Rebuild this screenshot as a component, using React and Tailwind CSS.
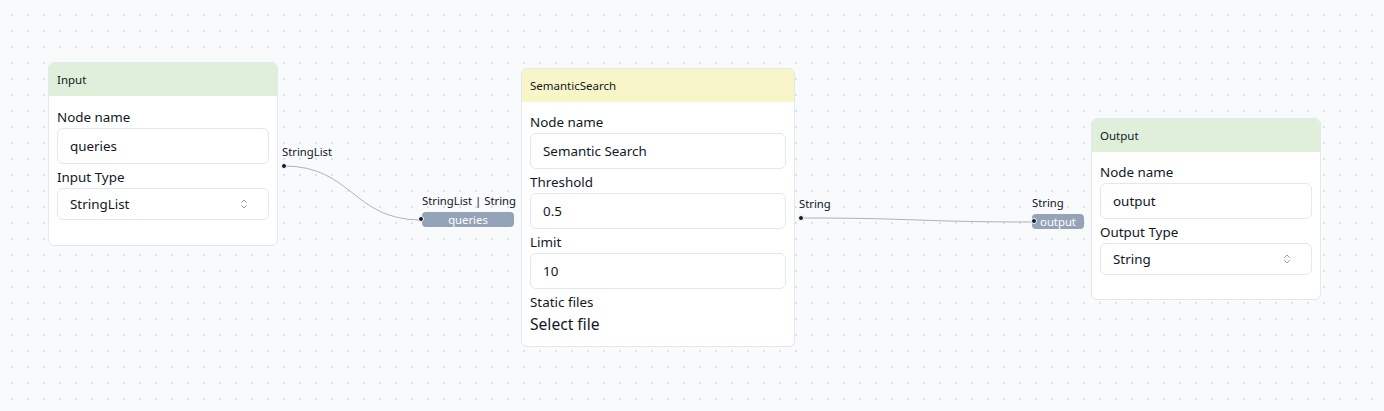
import React from "react";

function Field({ label, value }) {
  return (
    <div>
      <div className="text-[13.4px] leading-5 text-gray-900">{label}</div>
      <div className="mt-px h-[36px] rounded-md border border-slate-200 bg-white px-3 flex items-center text-[13.4px] text-gray-900">
        {value}
      </div>
    </div>
  );
}

function SelectField({ label, value }) {
  return (
    <div>
      <div className="text-[13.4px] leading-5 text-gray-900">{label}</div>
      <div className="mt-px h-[32px] rounded-md border border-slate-200 bg-white pl-3 pr-5 flex items-center justify-between text-[13.4px] text-gray-900">
        {value}
        <svg width="8" height="12" viewBox="0 0 8 12" fill="none" stroke="#9ca3af" strokeWidth="1" strokeLinecap="round" strokeLinejoin="round">
          <path d="M1.5 4.5L4 2l2.5 2.5" />
          <path d="M1.5 7.5L4 10l2.5-2.5" />
        </svg>
      </div>
    </div>
  );
}

function Node({ title, header, className, body = "pt-[11px]", children }) {
  return (
    <div className={`absolute rounded-md border border-slate-200 bg-white overflow-hidden ${className}`}>
      <div className={`h-[33px] px-2 flex items-center text-[11.5px] text-gray-900 ${header}`}>{title}</div>
      <div className={`px-2 flex flex-col gap-[3px] ${body}`}>{children}</div>
    </div>
  );
}

function Dot({ className = "" }) {
  return <div className={`w-[6px] h-[6px] shrink-0 rounded-full bg-gray-900 border border-white ${className}`} />;
}

// source handle: label above, dot below
function SourceHandle({ label, className }) {
  return (
    <div className={`absolute flex flex-col items-start gap-[3px] ${className}`}>
      <div className="pl-px text-[11.3px] leading-4 text-gray-900 whitespace-nowrap">{label}</div>
      <Dot />
    </div>
  );
}

// target handle: type label above, pill with field name, dot pinned on the pill's left edge
function TargetHandle({ label, name, className, pill, dot }) {
  return (
    <div className={`absolute flex flex-col items-start gap-[3px] ${className}`}>
      <div className="text-[11.3px] leading-4 text-gray-900 whitespace-nowrap">{label}</div>
      <div className={`relative h-[15px] rounded bg-[#94a3b8] text-white text-[11.3px] leading-[15px] text-center ${pill}`}>
        {name}
        <Dot className={`absolute top-[4px] ${dot}`} />
      </div>
    </div>
  );
}

export default function App() {
  return (
    <div
      className="relative w-[1384px] h-[411px] overflow-hidden bg-[#f8fafc] bg-[radial-gradient(#dfe2e6_0.9px,transparent_1px)] bg-[size:16px_16px] bg-[position:4px_7px]"
      style={{ fontFamily: '"Noto Sans", sans-serif' }}
    >
      {/* edges */}
      <svg className="absolute inset-0" width="1384" height="411" fill="none">
        <path d="M284 166 C352 166 353 220 421 220" stroke="#b1b1b7" strokeWidth="1" />
        <path d="M801 218 C917 218 918 222 1034 222" stroke="#b1b1b7" strokeWidth="1" />
      </svg>

      <Node title="Input" header="bg-[#e0efd9]" className="left-[48px] top-[62px] w-[230px] h-[184px]">
        <Field label="Node name" value="queries" />
        <SelectField label="Input Type" value="StringList" />
      </Node>

      <Node title="SemanticSearch" header="bg-[#f8f5c8]" body="pt-[10px]" className="left-[521px] top-[68px] w-[274px] h-[279px]">
        <Field label="Node name" value="Semantic Search" />
        <Field label="Threshold" value="0.5" />
        <Field label="Limit" value="10" />
        <div>
          <div className="text-[13.4px] leading-5 text-gray-900">Static files</div>
          <div className="text-[15.6px] leading-6 text-gray-900">Select file</div>
        </div>
      </Node>

      <Node title="Output" header="bg-[#e0efd9]" body="pt-[10px]" className="left-[1091px] top-[118px] w-[230px] h-[182px]">
        <Field label="Node name" value="output" />
        <SelectField label="Output Type" value="String" />
      </Node>

      <SourceHandle label="StringList" className="left-[281px] top-[144px]" />
      <TargetHandle label="StringList | String" name="queries" pill="w-[92px]" dot="-left-[4px]" className="left-[422px] top-[193px]" />
      <SourceHandle label="String" className="left-[798px] top-[196px]" />
      <TargetHandle label="String" name="output" pill="w-[52px]" dot="-left-[1px]" className="left-[1032px] top-[195px]" />
    </div>
  );
}
